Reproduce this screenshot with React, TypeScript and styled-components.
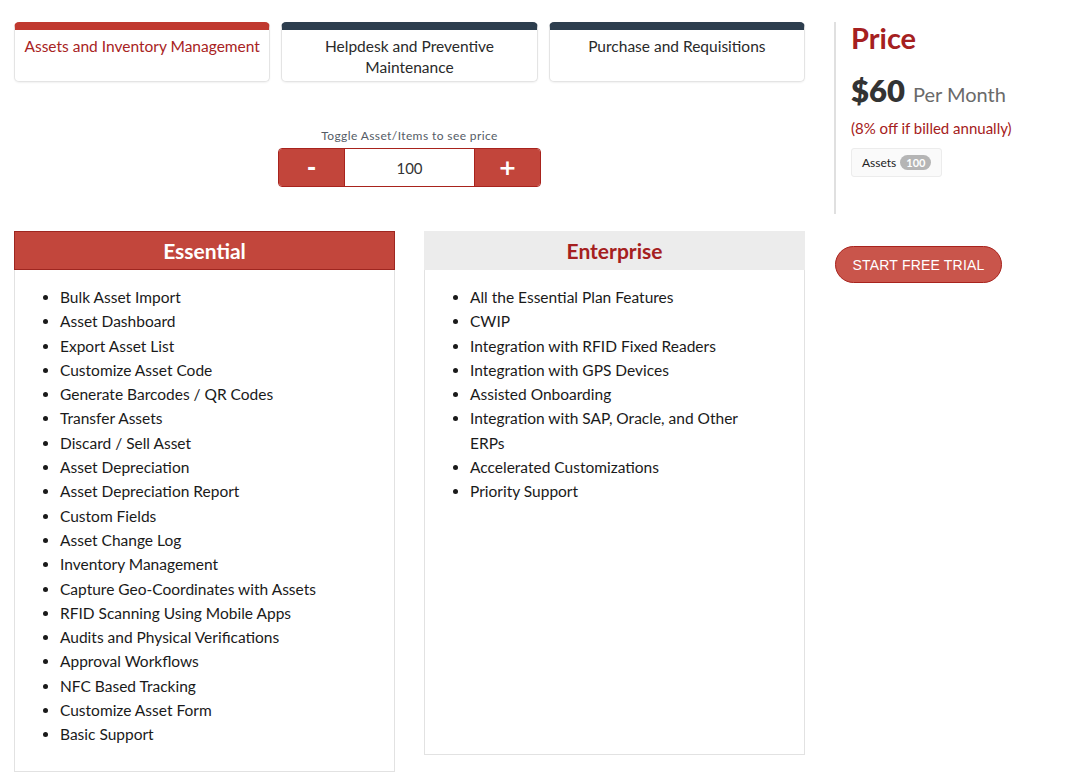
import * as React from 'react';
import styled, { createGlobalStyle } from 'styled-components';

const GlobalStyle = createGlobalStyle`
    body{
        margin: 0;
        background: #ffffff;
        font-family: 'Lato', 'Noto Sans', sans-serif;
        color: #222;
    }
    *{ box-sizing: border-box; }
`

const essential = [
    'Bulk Asset Import',
    'Asset Dashboard',
    'Export Asset List',
    'Customize Asset Code',
    'Generate Barcodes / QR Codes',
    'Transfer Assets',
    'Discard / Sell Asset',
    'Asset Depreciation',
    'Asset Depreciation Report',
    'Custom Fields',
    'Asset Change Log',
    'Inventory Management',
    'Capture Geo-Coordinates with Assets',
    'RFID Scanning Using Mobile Apps',
    'Audits and Physical Verifications',
    'Approval Workflows',
    'NFC Based Tracking',
    'Customize Asset Form',
    'Basic Support',
];

const enterprise = [
    'All the Essential Plan Features',
    'CWIP',
    'Integration with RFID Fixed Readers',
    'Integration with GPS Devices',
    'Assisted Onboarding',
    'Integration with SAP, Oracle, and Other ERPs',
    'Accelerated Customizations',
    'Priority Support',
];

const tabs = [
    'Assets and Inventory Management',
    'Helpdesk and Preventive Maintenance',
    'Purchase and Requisitions',
];

const App = () => {
    const [count, setCount] = React.useState(100);
    const [active, setActive] = React.useState(0);
    return(
        <Page>
            <GlobalStyle/>
            <Main>
                <Tabs>
                    {tabs.map((t, i) => (
                        <Tab key={t} $active={i === active} onClick={() => setActive(i)}>
                            <span>{t}</span>
                        </Tab>
                    ))}
                </Tabs>
                <Toggle>
                    <p>Toggle Asset/Items to see price</p>
                    <Stepper>
                        <StepButton onClick={() => setCount(Math.max(0, count - 1))}>-</StepButton>
                        <StepInput value={count} onChange={e => setCount(Number(e.target.value) || 0)} />
                        <StepButton onClick={() => setCount(count + 1)}>+</StepButton>
                    </Stepper>
                </Toggle>
                <Plans>
                    <Plan $tall>
                        <PlanHead $primary>Essential</PlanHead>
                        <PlanList>
                            {essential.map(f => <li key={f}>{f}</li>)}
                        </PlanList>
                    </Plan>
                    <Plan>
                        <PlanHead>Enterprise</PlanHead>
                        <PlanList>
                            {enterprise.map(f => <li key={f}>{f}</li>)}
                        </PlanList>
                    </Plan>
                </Plans>
            </Main>
            <Side>
                <PriceBox>
                    <h2>Price</h2>
                    <Amount>
                        <strong>$60</strong>
                        <span>Per Month</span>
                    </Amount>
                    <Discount>(8% off if billed annually)</Discount>
                    <Chip>
                        Assets <b>100</b>
                    </Chip>
                </PriceBox>
                <TrialButton>START FREE TRIAL</TrialButton>
            </Side>
        </Page>
    )
}

const Page = styled.div`
    display: flex;
    flex-direction: row;
    align-items: flex-start;
    padding: 22px 0 0 14px;
    width: 1070px;
`
const Main = styled.div`
    width: 791px;
    display: flex;
    flex-direction: column;
`
const Tabs = styled.div`
    display: grid;
    grid-template-columns: repeat(3, 1fr);
    gap: 11px;
`
const Tab = styled.div<{ $active?: boolean }>`
    height: 60px;
    border: 1px solid #e4e4e4;
    border-top: 8px solid ${p => p.$active ? '#c0392f' : '#2d3e4e'};
    border-radius: 5px;
    background: #fff;
    box-shadow: 0 1px 2px rgba(0,0,0,0.06);
    text-align: center;
    padding: 6px 4px 0;
    font-size: 15.5px;
    line-height: 21px;
    color: ${p => p.$active ? '#a82323' : '#2a2a2a'};
    cursor: pointer;
    span{
        display: block;
        padding: 0 ${p => p.$active ? '0' : '28px'};
    }
`
const Toggle = styled.div`
    margin-top: 46px;
    display: flex;
    flex-direction: column;
    align-items: center;
    p{
        margin: 0 0 4px;
        font-size: 12px;
        letter-spacing: 0.4px;
        color: #555c66;
        line-height: 16px;
    }
`
const Stepper = styled.div`
    display: flex;
    flex-direction: row;
    width: 263px;
    height: 39px;
    border: 1px solid #a8231d;
    border-radius: 4px;
    overflow: hidden;
`
const StepButton = styled.button`
    width: 65px;
    border: none;
    background: #c2453b;
    color: #fff;
    font-size: 22px;
    font-weight: 900;
    font-family: 'DejaVu Sans', sans-serif;
    cursor: pointer;
    padding: 0;
`
const StepInput = styled.input`
    flex: 1;
    min-width: 0;
    border: none;
    border-left: 1px solid #a8231d;
    border-right: 1px solid #a8231d;
    text-align: center;
    font-family: 'Lato', sans-serif;
    font-size: 15px;
    color: #333;
    outline: none;
`
const Plans = styled.div`
    margin-top: 44px;
    display: flex;
    flex-direction: row;
    align-items: flex-start;
    gap: 29px;
`
const Plan = styled.div<{ $tall?: boolean }>`
    width: 381px;
    border: 1px solid #e2e2e2;
    min-height: ${p => p.$tall ? '541px' : '524px'};
    background: #fff;
`
const PlanHead = styled.div<{ $primary?: boolean }>`
    height: 39px;
    margin: -1px -1px 0;
    background: ${p => p.$primary ? '#c2463c' : '#ececec'};
    border: 1px solid ${p => p.$primary ? '#9e2620' : '#ececec'};
    color: ${p => p.$primary ? '#fff' : '#a52020'};
    text-align: center;
    font-size: 21px;
    font-weight: 700;
    line-height: 37px;
`
const PlanList = styled.ul`
    margin: 0;
    padding: 15px 50px 18px 45px;
    li{
        font-size: 15.5px;
        line-height: 24.3px;
        color: #1a1a1a;
        padding-left: 0;
    }
`
const Side = styled.div`
    margin-left: 29px;
    display: flex;
    flex-direction: column;
    align-items: flex-start;
`
const PriceBox = styled.div`
    border-left: 2px solid #e0e0e0;
    padding: 0 0 37px 15px;
    width: 220px;
    h2{
        margin: 0;
        font-size: 29px;
        line-height: 32px;
        font-weight: 700;
        color: #a52020;
    }
`
const Amount = styled.div`
    margin-top: 17px;
    display: flex;
    align-items: baseline;
    gap: 8px;
    strong{
        font-size: 31px;
        font-weight: 800;
        color: #333;
    }
    span{
        font-size: 20px;
        color: #6a6a6a;
    }
`
const Discount = styled.div`
    margin-top: 10px;
    font-size: 15px;
    color: #a52020;
`
const Chip = styled.div`
    margin-top: 11px;
    display: inline-flex;
    align-items: center;
    gap: 4px;
    padding: 0 10px;
    height: 29px;
    border: 1px solid #ececec;
    border-radius: 3px;
    background: #fafafa;
    font-size: 12px;
    color: #222;
    b{
        background: #b5b5b5;
        color: #fff;
        font-size: 11px;
        font-weight: 700;
        border-radius: 10px;
        padding: 1px 6px;
    }
`
const TrialButton = styled.button`
    margin-top: 32px;
    margin-left: 1px;
    width: 167px;
    height: 37px;
    border-radius: 19px;
    border: 1px solid #a8231d;
    background: #c9554b;
    color: #fff;
    font-family: 'Liberation Sans', Arial, sans-serif;
    font-size: 14px;
    letter-spacing: 0.2px;
    cursor: pointer;
`

export default App;
